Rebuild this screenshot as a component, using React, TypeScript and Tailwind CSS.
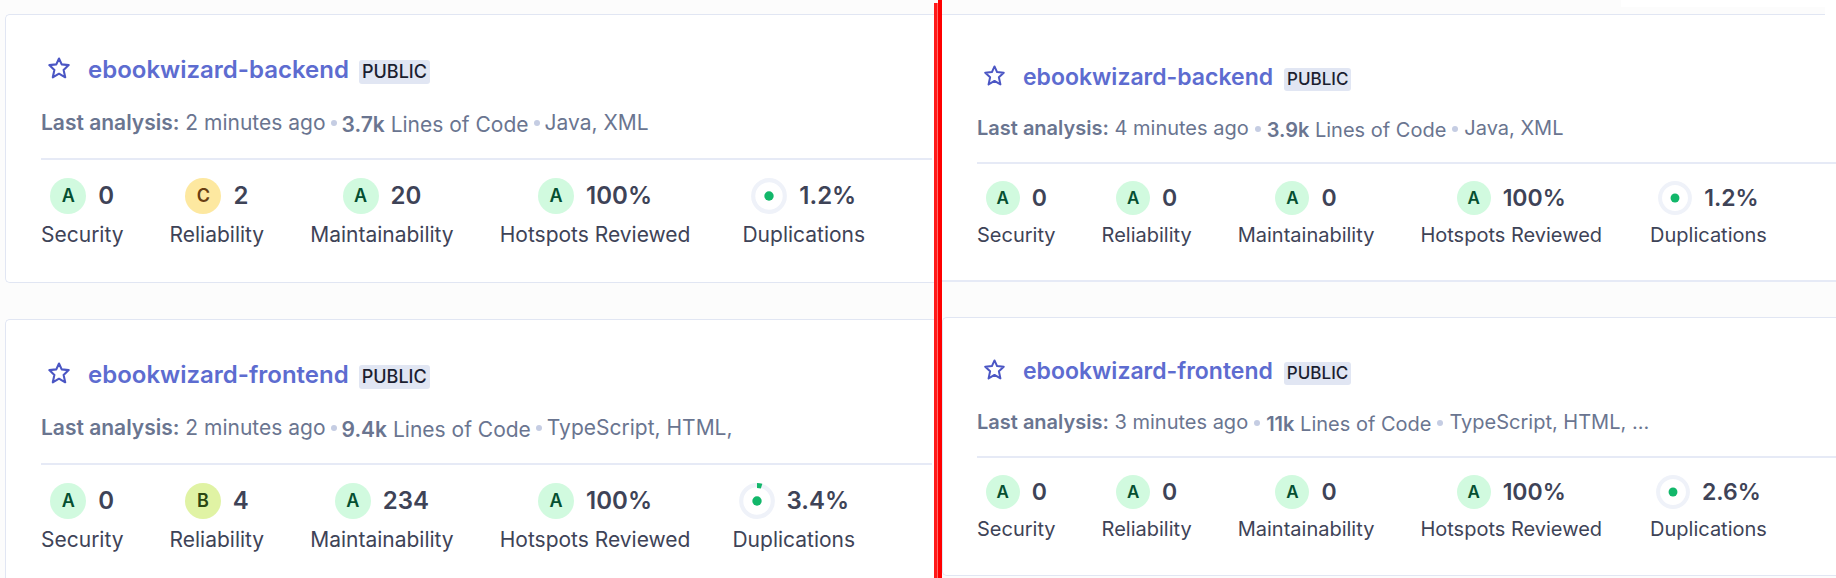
import { Fragment } from 'react';

type Grade = 'A' | 'B' | 'C';

interface Project {
  name: string;
  age: string;
  lines: string;
  languages: string;
  ratings: { label: string; grade: Grade; value: string }[];
  duplications: string;
  arc?: boolean;
  metricClass: string;
}

interface Scale {
  title: string;
  titleRow: string;
  star: string;
  pill: string;
  meta: string;
  dot: string;
  rule: string;
  metrics: string;
  circle: string;
  letter: string;
  value: string;
  label: string;
}

const large: Scale = {
  title: 'text-2xl leading-9',
  titleRow: 'h-9',
  star: 'ml-[7px] mr-[18px] size-[22px]',
  pill: 'ml-2.5 h-6 px-[3px] text-lg leading-6',
  meta: 'mt-5 h-[30px] text-[21px] leading-[30px]',
  dot: 'mx-[5px]',
  rule: 'mt-5',
  metrics: 'mt-[18px] gap-[46px]',
  circle: 'size-9',
  letter: 'text-lg',
  value: 'text-2xl leading-9',
  label: 'mt-1.5 text-[21px] leading-[30px]',
};

const small: Scale = {
  title: 'text-[23px] leading-[34px]',
  titleRow: 'h-[34px]',
  star: 'ml-[7px] mr-[18px] size-[21px]',
  pill: 'ml-[11px] h-[23px] px-[3px] text-[17px] leading-[23px]',
  meta: 'mt-5 h-[29px] text-xl leading-[29px]',
  dot: 'mx-1.5',
  rule: 'mt-[19px]',
  metrics: 'mt-[17px] gap-[46px]',
  circle: 'size-[34px]',
  letter: 'text-[17px]',
  value: 'text-[23px] leading-[34px]',
  label: 'mt-1.5 text-xl leading-[29px]',
};

const gradeColors: Record<Grade, string> = {
  A: 'bg-[#d1fadf] text-[#054f31]',
  B: 'bg-[#e0f3a4] text-[#2b4712]',
  C: 'bg-[#fde8a0] text-[#693e11]',
};

const project = (
  name: string,
  age: string,
  lines: string,
  languages: string,
  r: [Grade, string],
  m: string,
  duplications: string,
  metricClass: string,
  arc = false,
): Project => ({
  name,
  age,
  lines,
  languages,
  duplications,
  metricClass,
  arc,
  ratings: [
    { label: 'Security', grade: 'A', value: '0' },
    { label: 'Reliability', grade: r[0], value: r[1] },
    { label: 'Maintainability', grade: 'A', value: m },
    { label: 'Hotspots Reviewed', grade: 'A', value: '100%' },
  ],
});

const before = [
  project('ebookwizard-backend', '2 minutes ago', '3.7k', 'Java, XML', ['C', '2'], '20', '1.2%', 'ml-1.5'),
  project('ebookwizard-frontend', '2 minutes ago', '9.4k', 'TypeScript, HTML,', ['B', '4'], '234', '3.4%', '-ml-1', true),
];
const after = [
  project('ebookwizard-backend', '4 minutes ago', '3.9k', 'Java, XML', ['A', '0'], '0', '1.2%', 'ml-0.5'),
  project('ebookwizard-frontend', '3 minutes ago', '11k', 'TypeScript, HTML, ...', ['A', '0'], '0', '2.6%', 'ml-0.5'),
];

function Star({ className }: { className: string }) {
  return (
    <svg viewBox="0 0 22 22" className={className} fill="none" stroke="#4b56c4" strokeWidth="2.1" strokeLinejoin="round" aria-hidden="true">
      <path d="M11 1.5 13.7 7.4 20.7 8.1 15.6 12.9 17.2 20.3 11 16.7 4.8 20.3 6.4 12.9 1.3 8.1 8.3 7.4Z" />
    </svg>
  );
}

function Ring({ className, arc }: { className: string; arc?: boolean }) {
  return (
    <svg viewBox="0 0 36 36" className={className} fill="none" aria-hidden="true">
      <circle cx="18" cy="18" r="15.8" stroke="#eff2f9" strokeWidth="4.2" />
      {arc && <path d="M18 2.5A15.5 15.5 0 0 1 22.6 3.2" stroke="#12b76a" strokeWidth="5" />}
      <circle cx="18" cy="18" r="4.7" fill="#12b76a" />
    </svg>
  );
}

function Dot({ className }: { className: string }) {
  return <span className={`size-1.5 shrink-0 rounded-full bg-[#c5cde3] ${className}`} />;
}

function Card({ p, s }: { p: Project; s: Scale }) {
  return (
    <>
      <div className={`flex items-center ${s.titleRow}`}>
        <button type="button" aria-label={`Add ${p.name} to favorites`} className="flex pb-1">
          <Star className={s.star} />
        </button>
        <a href="#" className={`font-semibold text-[#5d6cd0] ${s.title}`}>{p.name}</a>
        <span className={`mt-1 rounded-[3px] bg-[#e1e6f3] font-medium text-[#1b1e30] ${s.pill}`}>PUBLIC</span>
      </div>
      <div className={`flex items-center whitespace-nowrap text-[#6a7590] ${s.meta}`}>
        <span><b className="font-semibold">Last analysis:</b> {p.age}</span>
        <Dot className={s.dot} />
        <span className="pt-[3px]"><b className="font-semibold">{p.lines}</b> Lines of Code</span>
        <Dot className={s.dot} />
        <span>{p.languages}</span>
      </div>
      <hr className={`border-t-2 border-[#e6eaf6] ${s.rule}`} />
      <dl className={`flex whitespace-nowrap text-[#3e4357] ${s.metrics}`}>
        {p.ratings.map((r) => (
          <div key={r.label} className="flex flex-col-reverse items-center">
            <dt className={s.label}>{r.label}</dt>
            <dd className={`flex items-center gap-3 font-semibold ${s.value}`}>
              <span className={`flex items-center justify-center rounded-full ${s.circle} ${s.letter} ${gradeColors[r.grade]}`}>{r.grade}</span>
              {r.value}
            </dd>
          </div>
        ))}
        <div className={`flex flex-col-reverse items-center ${p.metricClass}`}>
          <dt className={s.label}>Duplications</dt>
          <dd className={`flex items-center gap-3 font-semibold ${s.value}`}>
            <Ring className={s.circle} arc={p.arc} />
            {p.duplications}
          </dd>
        </div>
      </dl>
    </>
  );
}

export default function App() {
  return (
    <main className="flex h-screen overflow-hidden bg-[#fcfcfc] font-['Inter',sans-serif]">
      <section className="flex min-w-0 flex-[934] flex-col gap-9 overflow-hidden pt-3.5">
        {before.map((p) => (
          <article key={p.name} className="ml-[5px] shrink-0 rounded-l-[5px] border border-r-0 border-[#e1e6f3] bg-white pb-8 pl-[35px] pr-0.5 pt-[37px]">
            <Card p={p} s={large} />
          </article>
        ))}
      </section>
      <div className="flex w-2 shrink-0">
        <div className="mt-[3px] w-[3px] bg-[#ff1a1a]" />
        <div className="mt-[3px] w-px bg-[#ff6b6b]" />
        <div className="w-1 bg-[#ff0000]" />
      </div>
      <section className="min-w-0 flex-[894] overflow-hidden">
        {after.map((p, i) => (
          <Fragment key={p.name}>
            {i === 0 ? (
              <>
                <div className="flex h-3.5 items-start justify-end bg-[#fcfcfc]">
                  <div className="h-[7px] w-[204px] bg-white" />
                  <div className="h-[15px] w-[11px] bg-white" />
                </div>
                <article className="border-b-2 border-[#e6eaf6] bg-white pb-[30px]">
                  <div className="mr-[11px] h-px bg-[#e1e6f3]" />
                  <div className="pl-[35px] pt-[45px]">
                    <Card p={p} s={small} />
                  </div>
                </article>
              </>
            ) : (
              <article className="mt-[35px] rounded-l-[5px] border border-r-0 border-[#e1e6f3] bg-white pb-[31px] pl-[34px] pt-9">
                <Card p={p} s={small} />
              </article>
            )}
          </Fragment>
        ))}
      </section>
    </main>
  );
}
